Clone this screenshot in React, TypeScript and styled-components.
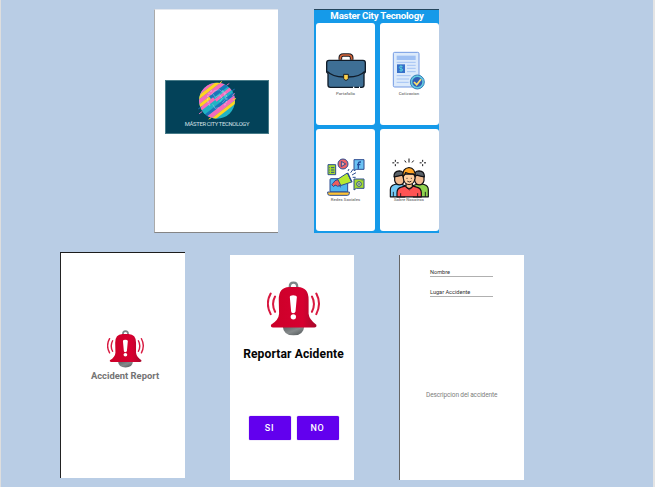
import React from "react";
import styled, { createGlobalStyle } from "styled-components";

const GlobalStyle = createGlobalStyle`
  *, *::before, *::after { box-sizing: border-box; }
  body { margin: 0; font-family: Roboto, "Liberation Sans", sans-serif; background: #b9cde5; }
`;

const Board = styled.main`
  display: flex;
  flex-direction: column;
  gap: 19px;
  width: 655px;
  height: 487px;
  padding-top: 9px;
  overflow: hidden;
  background: #b9cde5;
  border-left: 1px solid #dedede;
  border-right: 2px solid #e4e4e4;
`;

const Row = styled.div<{ $left: number; $gap: number }>`
  display: flex;
  align-items: flex-start;
  gap: ${(p) => p.$gap}px;
  padding-left: ${(p) => p.$left}px;
`;

const Screen = styled.section<{ $w: number; $h: number; $drop?: number }>`
  display: flex;
  flex-direction: column;
  align-items: center;
  flex: none;
  width: ${(p) => p.$w}px;
  height: ${(p) => p.$h}px;
  margin-top: ${(p) => p.$drop ?? 0}px;
  background: #fff;
`;

const SplashScreen = styled(Screen)`
  padding-left: 1px;
  border-left: 1px solid #aaa;
  border-top: 1px solid #e3e7ee;
  border-bottom: 1px solid #858585;
`;

const AlertSplash = styled(Screen)`
  border-left: 1px solid #222;
  border-top: 1px solid #1c1c1c;
  padding-top: 77px;
  padding-left: 4px;
`;

const FormScreen = styled(Screen)`
  border-left: 1px solid #666;
  align-items: flex-start;
  padding: 12px 0 0 30px;
`;

const ReportScreen = styled(Screen)`
  padding-top: 26px;
  padding-left: 3px;
`;

const Banner = styled.div`
  display: flex;
  flex-direction: column;
  align-items: center;
  width: 104px;
  height: 54px;
  margin-top: 70px;
  background: #034259;
  border: 1px solid #477b88;
`;

const BannerText = styled.span`
  margin-top: -1px;
  font-size: 5.8px;
  line-height: 8px;
  letter-spacing: -0.3px;
  white-space: nowrap;
  color: #d3e1e5;
`;

const MenuScreen = styled(Screen)`
  align-items: stretch;
  padding: 0 1px 2px 2px;
  background: #159ae9;
  border-top: 1px solid #25465d;
`;

const MenuTitle = styled.h1`
  margin: 0;
  height: 13px;
  font-size: 9.7px;
  line-height: 12px;
  font-weight: 700;
  letter-spacing: -0.2px;
  text-align: center;
  white-space: nowrap;
  color: #fff;
`;

const CardGrid = styled.div`
  display: grid;
  flex: 1;
  grid-template-columns: 59px 59px;
  grid-template-rows: 102px 102px;
  gap: 4.5px;
  justify-content: space-between;
`;

const Card = styled.div`
  display: flex;
  flex-direction: column;
  align-items: center;
  padding-top: 28px;
  background: #fff;
  border-radius: 3px;
`;

const IconBox = styled.div`
  display: flex;
  align-items: center;
  justify-content: center;
  height: 40px;
`;

const CardLabel = styled.span`
  font-size: 4.3px;
  line-height: 6px;
  font-weight: 500;
  white-space: nowrap;
  color: #777;
`;

const AppName = styled.h2`
  margin: 2px 0 0 0;
  font-size: 9.4px;
  line-height: 12px;
  font-weight: 700;
  white-space: nowrap;
  color: #747474;
`;

const Question = styled.h2`
  margin: 11px 0 0;
  font-size: 12.1px;
  line-height: 15px;
  font-weight: 700;
  letter-spacing: 0.1px;
  white-space: nowrap;
  color: #050505;
`;

const Answers = styled.div`
  display: flex;
  gap: 6px;
  margin-top: 54px;
`;

const AnswerButton = styled.button`
  width: 42px;
  height: 24px;
  padding: 1px 0 0;
  border: 0;
  border-radius: 1.5px;
  background: #6200ee;
  box-shadow: 0 0 1px #7b3ccf;
  color: #fff;
  font: 500 9px/23px Roboto, sans-serif;
  letter-spacing: 0.7px;
`;

const Field = styled.div`
  width: 63px;
  height: 10px;
  margin-bottom: 10px;
  border-bottom: 1px solid #b0b0b0;
  font-size: 5.6px;
  line-height: 10px;
  white-space: nowrap;
  color: #333;
`;

const Description = styled.p`
  margin: 83px 0 0 -4px;
  font-size: 6.5px;
  line-height: 10px;
  letter-spacing: -0.12px;
  white-space: nowrap;
  color: #7d7d7d;
`;

const Logo = () => (
  <svg width="40" height="40" viewBox="143 240 120 120">
    <defs>
      <clipPath id="disc"><circle cx="203" cy="299" r="54" /></clipPath>
    </defs>
    <g clipPath="url(#disc)">
      <rect x="145" y="240" width="116" height="116" fill="#21b3c5" />
      <g transform="rotate(-38 203 299)">
        <rect x="130" y="243" width="150" height="10" fill="#f66abb" />
        <rect x="130" y="253" width="150" height="10" fill="#ffd321" />
        <rect x="130" y="263" width="150" height="12" fill="#f66abb" />
        <rect x="130" y="275" width="62" height="9" fill="#ffd321" />
        <rect x="192" y="275" width="90" height="11" fill="#1a75ba" />
        <rect x="130" y="284" width="70" height="10" fill="#f66abb" />
        <rect x="200" y="291" width="90" height="10" fill="#f66abb" />
        <rect x="130" y="301" width="150" height="8" fill="#21b3c5" />
        <rect x="130" y="309" width="150" height="9" fill="#1a75ba" />
        <rect x="150" y="318" width="130" height="13" fill="#f66abb" />
        <rect x="130" y="331" width="150" height="9" fill="#ffd321" />
      </g>
    </g>
    <g strokeWidth="3" strokeLinecap="round">
      <path d="M211 247l6-5M184 351l-5 3M251 296l8-3" stroke="#ffd321" />
      <path d="M233 252l6-4M158 332l-8 6M250 283l6-5" stroke="#d66cb6" />
      <path d="M155 318l-7 5M250 268l5-3" stroke="#1a75ba" />
    </g>
    <g fill="none" stroke="#d8e8f5" strokeOpacity=".42" strokeWidth="4">
      <path d="M188 269c-16 9-18 31-5 46M218 269c17 9 19 30 6 46" strokeDasharray="6 3" />
      <path d="M185 282l10-13 15-3 15 12 4 16-10 12M190 310l7 12 12-2M190 278l8 11 13-8 8 12-8 10" strokeWidth="2.5" />
    </g>
  </svg>
);

const Briefcase = () => (
  <svg width="40" height="36" viewBox="53 148 120 108" strokeLinejoin="round">
    <path d="M96 168v-6q0-8 9-8h16q9 0 9 8v6" fill="none" stroke="#1c1b20" strokeWidth="11" />
    <path d="M96 168v-5q0-9 9-9h16q9 0 9 9v5" fill="none" stroke="#da6639" strokeWidth="5" />
    <path d="M62 170h102q7 0 7 7v28l-4 5v34q0 7-7 7H66q-7 0-7-7v-34l-4-5v-28q0-7 7-7z" fill="#3e6f95" stroke="#101c29" strokeWidth="4" />
    <path d="M57 203q14 16 50 17h12q37-1 50-17" fill="none" stroke="#101c29" strokeWidth="4" />
    <path d="M106 212h14v12q-2 6-7 6t-7-6z" fill="#ffd34c" stroke="#18202a" strokeWidth="3" />
    <path d="M134 251h4M152 251h3" stroke="#fff" strokeWidth="4" />
  </svg>
);

const Invoice = () => (
  <svg width="34" height="40" viewBox="252 141 102 120">
    <rect x="256" y="145" width="77" height="104" rx="4" fill="#dceafb" stroke="#7299e3" strokeWidth="3" />
    <rect x="266" y="155" width="57" height="13" fill="#9fc0f3" />
    <g stroke="#a4c3f4" strokeWidth="3">
      <path d="M266 175h57M297 184h26M297 193h26M297 203h26M266 215h42M266 225h37M266 235h36" />
    </g>
    <rect x="267" y="181" width="24" height="26" fill="#3770c9" />
    <path d="M284 188q-10-4-10 2 0 4 5 4t5 4q0 5-10 2M279 184v19" fill="none" stroke="#58d7df" strokeWidth="2.5" />
    <circle cx="328" cy="234" r="21" fill="#64cce1" stroke="#397eba" strokeWidth="3" />
    <circle cx="328" cy="234" r="15" fill="#335fb5" />
    <path d="M318 234l8 8 13-16" fill="none" stroke="#ffe16a" strokeWidth="5" />
  </svg>
);

const SocialMedia = () => (
  <svg width="38" height="38" viewBox="56 102 114 114" stroke="#2c4d91" strokeWidth="3" strokeLinejoin="round">
    <rect x="59" y="122" width="23" height="30" fill="#a6db2d" />
    <path d="M68 131h10M68 138h10M68 145h10M63 131h2M63 138h2M63 145h2" />
    <circle cx="104" cy="120" r="15" fill="#ed6268" />
    <path d="M99 112l13 8-13 8z" fill="#f7a3a1" />
    <path d="M137 107h30v29h-22l-8 4z" fill="#6bc2f3" />
    <path d="M158 114h-3q-5 0-5 6v14M146 122h10" fill="none" stroke="#244e9c" strokeWidth="4" />
    <rect x="65" y="164" width="53" height="40" rx="3" fill="#51b6ee" />
    <path d="M58 204h65v4q0 6-6 6H64q-6 0-6-6z" fill="#ffc333" />
    <path d="M86 167l31-20 13 27-34 11z" fill="#b7e931" />
    <path d="M118 147l13 28" strokeWidth="4" />
    <path d="M89 167l8 17q-9 6-17-1l-4 5-6-6 5-5q3-9 14-10z" fill="#ef5d5b" />
    <path d="M91 183l7 7M119 141l3-6M127 146l8-11M131 153l12-7M133 160h9" />
    <path d="M137 165h30v28h-23l-7 5z" fill="#a6db2d" />
    <circle cx="152" cy="180" r="7" fill="#ddf291" />
    <path d="M149 180h6M152 177v6M160 169h3" strokeWidth="2" />
  </svg>
);

const Team = () => (
  <svg width="40" height="41" viewBox="243 98 120 122" stroke="#101014" strokeWidth="3.5" strokeLinejoin="round">
    <path d="M247 217v-21q0-13 13-16l14-3 16 6v34z" fill="#73c9f5" />
    <path d="M260 153v15q3 13 15 13t13-13v-15z" fill="#f2bc91" />
    <path d="M258 157q-1-17 16-18 14 0 15 18l-7-5q-12 3-24 5z" fill="#5b6268" />
    <path d="M316 183l17-6 15 3q13 3 13 16v21h-45z" fill="#8fd34f" />
    <path d="M320 153v15q3 13 14 13t14-13v-15z" fill="#f2bc91" />
    <path d="M318 157q0-18 15-18 17 1 16 18-13-2-22-5z" fill="#5b6268" />
    <path d="M267 217v-12q0-14 13-17l13-4h20l13 4q14 3 14 17v12z" fill="#ff5454" />
    <path d="M294 176v11q9 10 19 0v-11z" fill="#f6bb89" />
    <path d="M286 149v13q3 18 17 18 15 0 18-18v-13z" fill="#ffd0a1" />
    <path d="M285 157q-3-26 18-28 19 1 19 28l-6-9q-17 0-23-4-3 9-8 13z" fill="#ffa425" />
    <path d="M297 160v3M310 160v3M298 170q6 5 12 0M293 187l11 9 10-9M278 206v11M329 206v11M256 202v15M352 202v15" fill="none" strokeWidth="2.5" />
    <path d="M262 106v6M262 119v6M253 115h6M266 115h6M344 106v6M344 119v6M335 115h6M348 115h6M303 102v12M290 108l4 6M317 108l-5 6" strokeWidth="3" />
  </svg>
);

const AlarmBell = ({ width, height }: { width: number; height: number }) => (
  <svg width={width} height={height} viewBox="126 94 158 166" preserveAspectRatio="none">
    <defs>
      <linearGradient id="steel" x1="0" x2="1" y1="0" y2="1">
        <stop stopColor="#5c6265" /><stop offset=".5" stopColor="#858a8b" /><stop offset="1" stopColor="#4d5254" />
      </linearGradient>
      <linearGradient id="bellBody" x1="0" x2="1">
        <stop stopColor="#cc0028" /><stop offset=".7" stopColor="#d60030" /><stop offset="1" stopColor="#a6082b" />
      </linearGradient>
    </defs>
    <path d="M194 118v-7q0-12 11-12t11 12v7" fill="none" stroke="#7c8587" strokeWidth="7" />
    <path d="M173 231q2 27 32 27t32-27z" fill="url(#steel)" />
    <path d="M161 150q0-37 31-38h26q32 1 32 38v43q2 18 23 33 2 8-6 8H144q-8 0-6-8 23-14 24-33z" fill="url(#bellBody)" />
    <path d="M194 142q0-5 10-5t11 5l-4 44q-1 5-7 5t-6-5z" fill="#fff" />
    <circle cx="204.5" cy="202" r="8" fill="#fff" />
    <g fill="none" stroke="#d81940" strokeWidth="6" strokeLinecap="round">
      <path d="M150 141q-12 22 0 46M137 132q-17 30 0 62M260 141q12 22 0 46M273 132q16 30 0 62" />
    </g>
  </svg>
);

const menu = [
  { label: "Portafolio", Icon: Briefcase },
  { label: "Cotizacion", Icon: Invoice },
  { label: "Redes Sociales", Icon: SocialMedia },
  { label: "Sobre Nosotros", Icon: Team },
];

export default function App() {
  return (
    <>
      <GlobalStyle />
      <Board>
        <Row $left={153} $gap={36}>
          <SplashScreen $w={124} $h={224}>
            <Banner>
              <Logo />
              <BannerText>MÁSTER CITY TECNOLOGY</BannerText>
            </Banner>
          </SplashScreen>
          <MenuScreen $w={125} $h={224}>
            <MenuTitle>Master City Tecnology</MenuTitle>
            <CardGrid>
              {menu.map(({ label, Icon }) => (
                <Card key={label}>
                  <IconBox><Icon /></IconBox>
                  <CardLabel>{label}</CardLabel>
                </Card>
              ))}
            </CardGrid>
          </MenuScreen>
        </Row>
        <Row $left={59} $gap={45}>
          <AlertSplash $w={125} $h={226}>
            <AlarmBell width={37} height={38} />
            <AppName>Accident Report</AppName>
          </AlertSplash>
          <ReportScreen $w={124} $h={225} $drop={3}>
            <AlarmBell width={53} height={55} />
            <Question>Reportar Acidente</Question>
            <Answers>
              <AnswerButton>SI</AnswerButton>
              <AnswerButton>NO</AnswerButton>
            </Answers>
          </ReportScreen>
          <FormScreen $w={125} $h={225} $drop={3}>
            <Field>Nombre</Field>
            <Field>Lugar Accidente</Field>
            <Description>Descripcion del accidente</Description>
          </FormScreen>
        </Row>
      </Board>
    </>
  );
}
